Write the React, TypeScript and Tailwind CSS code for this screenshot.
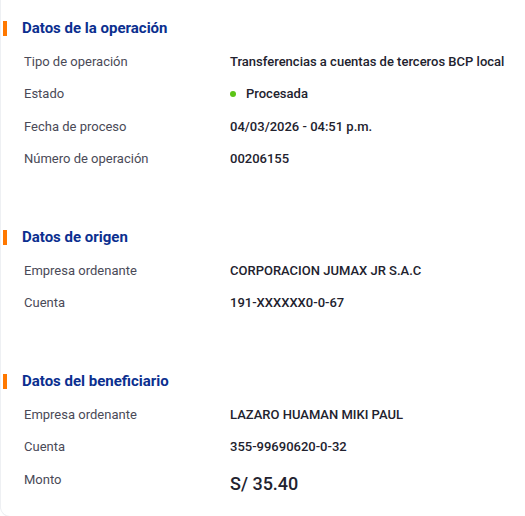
import React from 'react';

type Row = { label: string; value: React.ReactNode; big?: boolean };

const Section = ({ title, rows }: { title: string; rows: Row[] }) => (
  <div>
    <div className="flex items-center h-[16px]">
      <span className="w-[4px] h-[15px] bg-[#ff7800] ml-[2px]" />
      <h2 className="ml-[15px] text-[15px] font-bold text-[#0b2f8f] leading-none">{title}</h2>
    </div>
    <div className="mt-[9px] flex flex-col">
      {rows.map((row) => (
        <div key={row.label} className="flex items-center h-[32.5px]">
          <span className="pl-[23px] w-[229px] text-[13px] text-[#4a4a57]">{row.label}</span>
          {row.big ? (
            <span className="text-[18px] font-medium text-[#22222e] mt-[9px]">{row.value}</span>
          ) : (
            <span className="text-[13px] font-medium text-[#22222e]">{row.value}</span>
          )}
        </div>
      ))}
    </div>
  </div>
);

export default function App() {
  return (
    <div className="bg-white h-[516px] overflow-hidden font-['Roboto',sans-serif]">
      <div className="border-l border-b border-[#eef0f3] rounded-bl-[10px] pt-[20px] pb-[20px] flex flex-col gap-[54px]">
        <Section
          title="Datos de la operación"
          rows={[
            { label: 'Tipo de operación', value: 'Transferencias a cuentas de terceros BCP local' },
            {
              label: 'Estado',
              value: (
                <span className="flex items-center">
                  <span className="w-[6px] h-[6px] rounded-full bg-[#5cc416] mr-[10px]" />
                  Procesada
                </span>
              ),
            },
            { label: 'Fecha de proceso', value: '04/03/2026 - 04:51 p.m.' },
            { label: 'Número de operación', value: '00206155' },
          ]}
        />
        <Section
          title="Datos de origen"
          rows={[
            { label: 'Empresa ordenante', value: 'CORPORACION JUMAX JR S.A.C' },
            { label: 'Cuenta', value: '191-XXXXXX0-0-67' },
          ]}
        />
        <Section
          title="Datos del beneficiario"
          rows={[
            { label: 'Empresa ordenante', value: 'LAZARO HUAMAN MIKI PAUL' },
            { label: 'Cuenta', value: '355-99690620-0-32' },
            { label: 'Monto', value: 'S/ 35.40', big: true },
          ]}
        />
      </div>
    </div>
  );
}
